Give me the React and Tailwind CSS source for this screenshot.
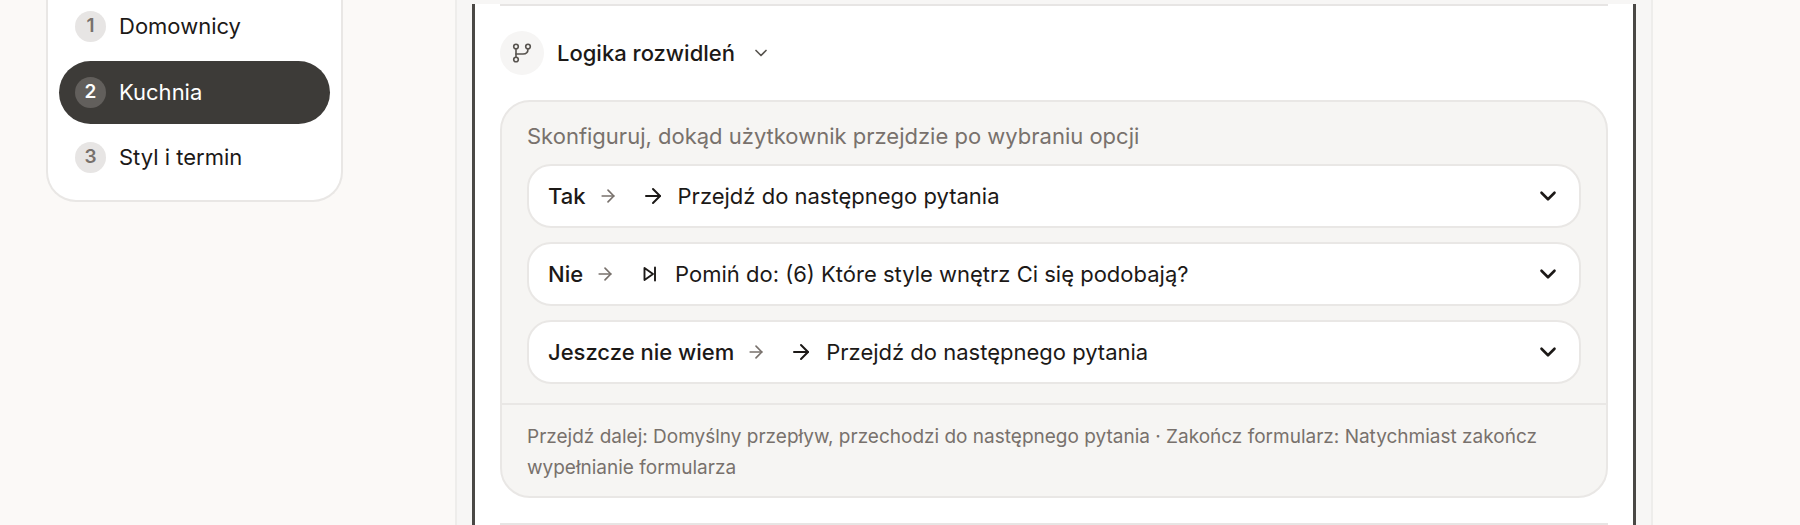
import { ArrowRight, ChevronDown } from 'lucide-react';

const steps = [
    { n: 1, label: 'Domownicy' },
    { n: 2, label: 'Kuchnia', active: true },
    { n: 3, label: 'Styl i termin' },
];

const rules = [
    { answer: 'Tak', target: 'Przejdź do następnego pytania' },
    { answer: 'Nie', target: 'Pomiń do: (6) Które style wnętrz Ci się podobają?', skip: true },
    { answer: 'Jeszcze nie wiem', target: 'Przejdź do następnego pytania' },
];

function BranchIcon() {
    return (
        <svg width="24" height="24" viewBox="0 0 24 24" fill="none" stroke="currentColor" strokeWidth="1.6" strokeLinecap="round" className="text-[#57534e]">
            <circle cx="6" cy="5.5" r="2.3" />
            <circle cx="18" cy="5.5" r="2.3" />
            <circle cx="6" cy="18.5" r="2.3" />
            <path d="M6 8v8" />
            <path d="M18 8c0 3-2 5-5 5H6" />
        </svg>
    );
}

function SkipIcon() {
    return (
        <svg width="14" height="16" viewBox="0 0 14 16" fill="none" stroke="currentColor" strokeWidth="1.9" strokeLinejoin="round" strokeLinecap="round">
            <path d="M1.5 2l8.5 6-8.5 6z" />
            <path d="M12 1.5v13" />
        </svg>
    );
}

export default function App() {
    return (
        <div className="flex h-[525px] w-[1800px] overflow-hidden bg-[#fbf9f7] font-['Inter',sans-serif] text-[#1c1917]">
            {/* Sidebar steps */}
            <div className="ml-[46px] w-[297px] shrink-0">
                <div className="-mt-[18px] flex flex-col gap-[2.5px] rounded-b-[30px] border-2 border-t-0 border-[#e9e7e5] bg-white px-[11px] pb-[11px] pt-[13px]">
                    {steps.map((step) => (
                        <div
                            key={step.n}
                            className={`flex h-[63px] items-center gap-[13px] rounded-full px-[16px] text-[22px] ${step.active ? 'bg-[#3d3b38] text-white' : ''}`}
                        >
                            <span className={`flex h-[31px] w-[31px] items-center justify-center rounded-full text-[19px] font-semibold ${step.active ? 'bg-[#625f5c] text-white' : 'bg-[#e7e5e4] text-[#78716c]'}`}>
                                {step.n}
                            </span>
                            {step.label}
                        </div>
                    ))}
                </div>
            </div>

            {/* Question editor */}
            <div className="ml-[112px] h-full w-[1198px] shrink-0 border-x-2 border-[#eeedeb] bg-[#f7f6f5] px-[15px]">
                <div className="h-full border-x-[3px] border-[#4a4845] bg-white px-[25px]">
                    <div className="mt-[4px] h-[2px] bg-[#e7e5e4]" />

                    <div className="mt-[25px] flex items-center">
                        <span className="flex h-[44px] w-[44px] items-center justify-center rounded-full bg-[#f6f5f4]">
                            <BranchIcon />
                        </span>
                        <span className="ml-[13px] text-[22px] font-medium">Logika rozwidleń</span>
                        <ChevronDown size={20} className="ml-[16px] text-[#57534e]" />
                    </div>

                    <div className="mt-[25px] h-[398px] rounded-[30px] border-2 border-[#e9e7e5] bg-[#f6f5f3]">
                        <div className="px-[25px] pt-[17px]">
                            <p className="text-[22px] leading-[34px] text-[#78716c]">Skonfiguruj, dokąd użytkownik przejdzie po wybraniu opcji</p>
                            <div className="mt-[11px] flex flex-col gap-[14px]">
                                {rules.map((rule) => (
                                    <div key={rule.answer} className="flex h-[64px] items-center rounded-[24px] border-2 border-[#e9e7e5] bg-white pl-[19px] pr-[18px]">
                                        <span className="text-[22px] font-medium">{rule.answer}</span>
                                        <ArrowRight size={20} className="ml-[12px] text-[#78716c]" />
                                        <span className="ml-[23px] flex w-[24px] justify-center">
                                            {rule.skip ? <SkipIcon /> : <ArrowRight size={24} />}
                                        </span>
                                        <span className="ml-[13px] flex-1 text-[22px]">{rule.target}</span>
                                        <ChevronDown size={26} strokeWidth={2.4} />
                                    </div>
                                ))}
                            </div>
                        </div>
                        <div className="mt-[19px] border-t-2 border-[#e9e7e5] px-[25px] pt-[16px] text-[19px] leading-[31px] text-[#78716c]">
                            Przejdź dalej: Domyślny przepływ, przechodzi do następnego pytania · Zakończ formularz: Natychmiast zakończ wypełnianie formularza
                        </div>
                    </div>

                    <div className="mt-[25px] h-[2px] bg-[#e7e5e4]" />
                </div>
            </div>
        </div>
    );
}
